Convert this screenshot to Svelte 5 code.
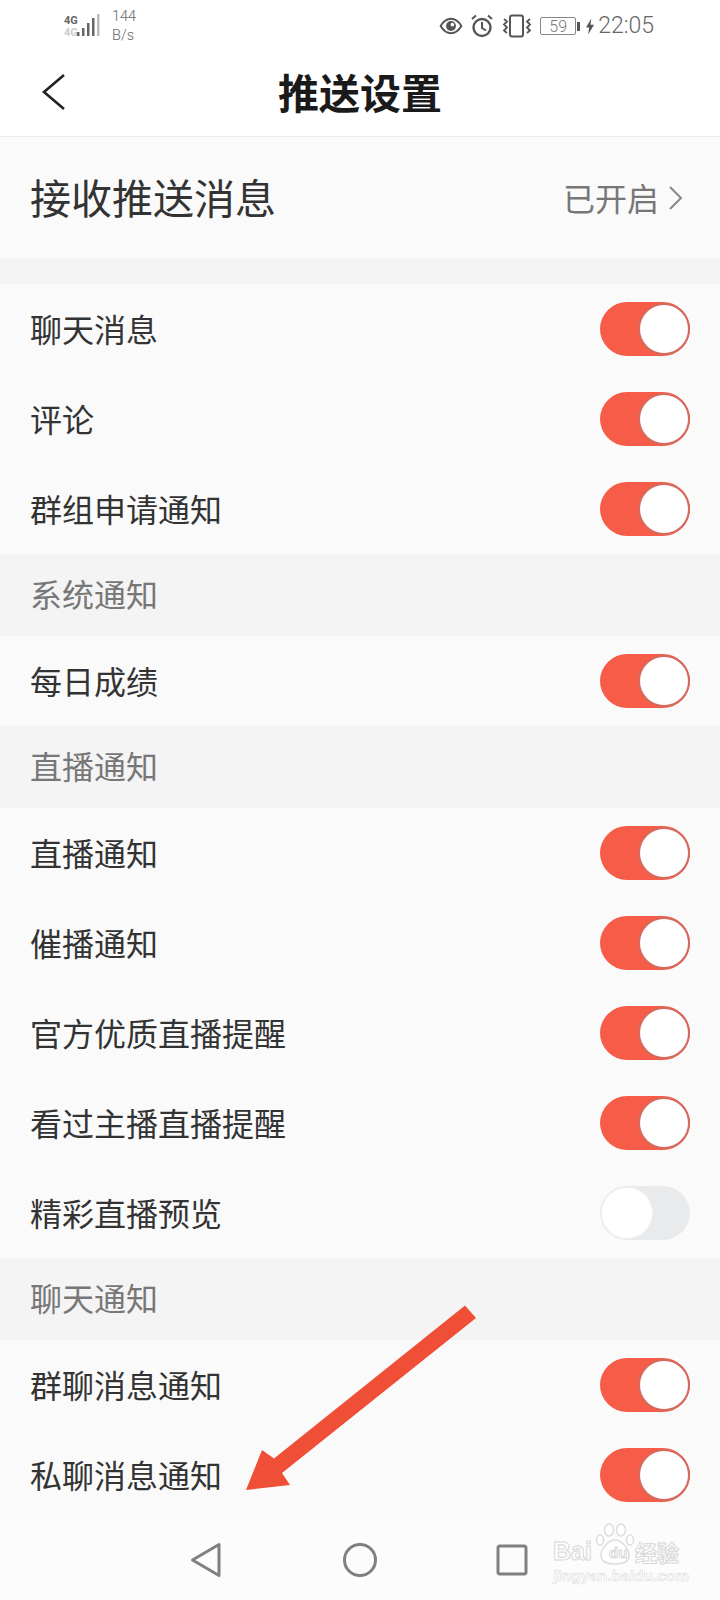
<script>
  const sections = [
    { rows: [['聊天消息', true], ['评论', true], ['群组申请通知', true]] },
    { title: '系统通知', rows: [['每日成绩', true]] },
    { title: '直播通知', rows: [['直播通知', true], ['催播通知', true], ['官方优质直播提醒', true], ['看过主播直播提醒', true], ['精彩直播预览', false]] },
    { title: '聊天通知', rows: [['群聊消息通知', true], ['私聊消息通知', true]] }
  ];
</script>

<div class="page">
  <div class="status">
    <div class="net">
      <svg width="36" height="28" viewBox="0 0 36 28">
        <text x="0" y="12" class="g4">4G</text>
        <text x="0" y="24" class="g4 faint">4G</text>
        <rect x="13" y="20" width="2.500" height="4" fill="#666" />
        <rect x="18" y="16" width="2.500" height="8" fill="#666" />
        <rect x="23" y="11" width="2.500" height="13" fill="#666" />
        <rect x="28" y="6" width="2.500" height="18" fill="#666" />
        <rect x="33" y="2" width="2.500" height="22" fill="#bbb" />
      </svg>
      <div class="speed"><span>144</span><span>B/s</span></div>
    </div>
    <div class="sys">
      <svg width="24" height="18" viewBox="0 0 26 20">
        <path d="M1.500 10C5 4 9 2 13 2s8 2 11.500 8C21 16 17 18 13 18S5 16 1.500 10Z" fill="none" stroke="#555" stroke-width="2.200" />
        <circle cx="13" cy="10" r="5.500" fill="#555" />
        <circle cx="14.500" cy="8.500" r="2" fill="#fff" />
      </svg>
      <svg width="24" height="24" viewBox="0 0 24 24">
        <circle cx="12" cy="13.500" r="8.500" fill="none" stroke="#555" stroke-width="2.400" />
        <path d="M12 8v6l4 2.500" fill="none" stroke="#555" stroke-width="2" />
        <path d="M2 5l4-3.500M22 5l-4-3.500" fill="none" stroke="#555" stroke-width="2" />
      </svg>
      <svg width="32" height="24" viewBox="0 0 32 24">
        <rect x="9" y="1.500" width="13" height="21" rx="2" fill="none" stroke="#555" stroke-width="2" />
        <path d="M3 5l3 2.500-3 3 3 3-3 3 3 2.500M29 5l-3 2.500 3 3-3 3 3 3-3 2.500" fill="none" stroke="#555" stroke-width="1.800" />
      </svg>
      <div class="battery"><span class="level">59</span></div>
      <i class="nub"></i>
      <svg class="bolt" width="8" height="17" viewBox="0 0 9 18"><path d="M6 0 0 10h3.500L2.500 18 9 7H5Z" fill="#555" /></svg>
      <span class="clock">22:05</span>
    </div>
  </div>

  <header>
    <svg class="back" width="26" height="38" viewBox="0 0 26 38">
      <path d="M23 2 3 19l20 17" fill="none" stroke="#222" stroke-width="2.600" />
    </svg>
    <h1>推送设置</h1>
  </header>

  <div class="master">
    <span class="master-label">接收推送消息</span>
    <span class="master-state">
      <span class="state-text">已开启</span>
      <svg width="16" height="26" viewBox="0 0 16 26"><path d="M2 2l11 11L2 24" fill="none" stroke="#888" stroke-width="2" /></svg>
    </span>
  </div>

  {#each sections as section}
    <div class="section-title">{section.title ?? ''}</div>
    {#each section.rows as [label, on]}
      <div class="row">
        <span>{label}</span>
        <div class="switch" class:on><i></i></div>
      </div>
    {/each}
  {/each}

  <nav>
    <svg class="nav-back" width="32" height="36" viewBox="0 0 32 36">
      <path d="M29 2.500v31L2.500 18Z" fill="none" stroke="#808080" stroke-width="3" stroke-linejoin="round" />
    </svg>
    <svg width="36" height="36" viewBox="0 0 36 36"><circle cx="18" cy="18" r="15.500" fill="none" stroke="#808080" stroke-width="3" /></svg>
    <svg width="32" height="32" viewBox="0 0 32 32"><rect x="2" y="2" width="28" height="28" rx="2" fill="none" stroke="#808080" stroke-width="3" /></svg>
  </nav>

  <svg class="arrow" width="240" height="190" viewBox="240 1305 240 190">
    <path d="M465 1305.500 476 1318 282 1473 290 1485 246 1490 262 1450 274 1458.500Z" fill="#ee4f36" />
  </svg>

  <div class="mark">
    <span class="bai">Bai</span>
    <svg class="paw" width="40" height="42" viewBox="0 0 40 42">
      <g fill="#fff" stroke="#ddd" stroke-width="1.500">
        <ellipse cx="5" cy="17" rx="3.500" ry="5" />
        <ellipse cx="14" cy="7" rx="4.500" ry="6" />
        <ellipse cx="26" cy="7" rx="4.500" ry="6" />
        <ellipse cx="35" cy="17" rx="3.500" ry="5" />
        <path d="M20 17c6 0 15 9 14 17-1 5-6 7-14 7S7 39 6 34C5 26 14 17 20 17Z" />
      </g>
    </svg>
    <span class="du">du</span>
    <span class="jy">经验</span>
    <span class="url">jingyan.baidu.com</span>
  </div>
</div>

<style>
  :global(body) {
    margin: 0;
  }

  .page {
    position: relative;
    width: 720px;
    height: 1600px;
    overflow: hidden;
    background: #fafafa;
    color: #333;
    font-family: "Noto Sans CJK SC", "Noto Sans", sans-serif;
  }

  .status {
    display: flex;
    justify-content: space-between;
    align-items: center;
    height: 50px;
    padding: 0 66px 0 64px;
    background: #fff;
  }

  .net {
    display: flex;
    align-items: center;
    gap: 12px;
    margin-top: 1px;
  }

  .g4 {
    font: bold 11px "Roboto", sans-serif;
    fill: #666;
  }

  .g4.faint {
    fill: #ccc;
  }

  .speed {
    display: flex;
    flex-direction: column;
    font: 300 14.500px/19px "Roboto", sans-serif;
    color: #666;
  }

  .sys {
    display: flex;
    align-items: center;
    margin-top: 2px;
  }

  .sys > svg {
    flex: none;
  }

  .sys > svg + svg {
    margin-left: 7px;
  }

  .battery {
    display: flex;
    justify-content: center;
    align-items: center;
    box-sizing: border-box;
    width: 36px;
    height: 18px;
    margin-left: 7px;
    border: 1px solid #888;
    border-radius: 2px;
  }

  .level {
    font: 300 16px/17px "Roboto", sans-serif;
    color: #777;
  }

  .nub {
    width: 3px;
    height: 9px;
    margin-left: 1px;
    background: #555;
  }

  .sys > .bolt {
    margin-left: 6px;
  }

  .clock {
    margin-left: 4px;
    font: 300 23px/28px "Roboto", sans-serif;
    color: #666;
  }

  header {
    position: relative;
    display: flex;
    justify-content: center;
    align-items: center;
    height: 86px;
    background: #fff;
    border-bottom: 1px solid #ececec;
  }

  .back {
    position: absolute;
    left: 41px;
    top: 23px;
  }

  h1 {
    margin: 0;
    font-size: 41px;
    font-weight: 700;
    line-height: 50px;
    color: #1a1a1a;
    transform: translateY(-2px);
  }

  .master {
    display: flex;
    justify-content: space-between;
    align-items: center;
    height: 121px;
    padding: 0 36px 0 30px;
  }

  .master-label {
    margin-bottom: 4px;
    font-size: 41px;
    line-height: 50px;
  }

  .master-state {
    display: flex;
    align-items: center;
    gap: 9px;
    font-size: 32px;
    line-height: 40px;
    color: #777;
  }

  .state-text {
    margin-bottom: 2px;
  }

  .section-title {
    height: 82px;
    padding-left: 30px;
    font-size: 32px;
    line-height: 79px;
    color: #777;
    background: #f4f4f4;
  }

  .section-title:empty {
    height: 26px;
  }

  .row {
    display: flex;
    justify-content: space-between;
    align-items: center;
    height: 90px;
    padding: 0 30px;
    font-size: 32px;
    line-height: 40px;
  }

  .row span {
    margin-bottom: 3px;
  }

  .switch {
    position: relative;
    width: 90px;
    height: 54px;
    border-radius: 27px;
    background: #e9eaec;
  }

  .switch i {
    position: absolute;
    top: 2px;
    left: 2px;
    width: 50px;
    height: 50px;
    border-radius: 50%;
    background: #fff;
    box-shadow: 0 0 0 1px #f2f2f2;
  }

  .switch.on {
    background: #f75c49;
  }

  .switch.on i {
    top: 3px;
    left: 40px;
    width: 48px;
    height: 48px;
    box-shadow: 0 0 0 2px #d46a5e;
  }

  nav {
    position: absolute;
    left: 0;
    right: 0;
    bottom: 0;
    display: grid;
    grid-template-columns: repeat(3, 152px);
    justify-content: center;
    justify-items: center;
    align-items: center;
    height: 80px;
    background: #fcfcfc;
  }

  .nav-back {
    margin-right: 4px;
  }

  .arrow {
    position: absolute;
    left: 240px;
    top: 1305px;
    filter: blur(0.5px);
  }

  .mark {
    position: absolute;
    left: 553px;
    top: 1523px;
    width: 130px;
    height: 62px;
    color: #fff;
    white-space: nowrap;
    -webkit-text-stroke: 1px #d8d8d8;
  }

  .mark > * {
    position: absolute;
  }

  .bai {
    left: 0;
    top: 14px;
    font: 700 25px/28px "Liberation Sans", sans-serif;
  }

  .paw {
    left: 42px;
    top: 0;
  }

  .du {
    left: 56px;
    top: 20px;
    font: 700 15px/20px "Liberation Sans", sans-serif;
  }

  .jy {
    left: 82px;
    top: 14px;
    font: 700 22px/28px "Noto Sans CJK SC", sans-serif;
  }

  .url {
    left: 0;
    top: 44px;
    font: 700 15.500px/18px "Liberation Sans", sans-serif;
    -webkit-text-stroke: 0.600px #dcdcdc;
  }
</style>
